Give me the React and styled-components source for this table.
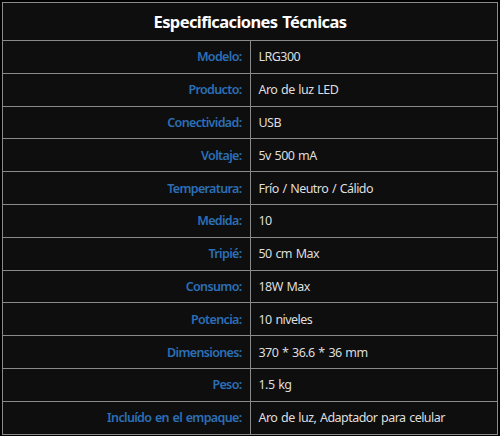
import React from 'react';
import styled, { createGlobalStyle } from 'styled-components';

const GlobalStyle = createGlobalStyle`
  body {
    margin: 0;
    background: #000000;
    font-family: "Noto Sans", "Open Sans", sans-serif;
  }
`;

const specs = [
  ['Modelo:', 'LRG300'],
  ['Producto:', 'Aro de luz LED'],
  ['Conectividad:', 'USB'],
  ['Voltaje:', '5v 500 mA'],
  ['Temperatura:', 'Frío / Neutro / Cálido'],
  ['Medida:', '10'],
  ['Tripié:', '50 cm Max'],
  ['Consumo:', '18W Max'],
  ['Potencia:', '10 niveles'],
  ['Dimensiones:', '370 * 36.6 * 36 mm'],
  ['Peso:', '1.5 kg'],
  ['Incluído en el empaque:', 'Aro de luz, Adaptador para celular'],
];

const Wrapper = styled.div`
  padding: 2px;
  width: 500px;
  height: 436px;
  box-sizing: border-box;
`;

const Table = styled.table`
  width: 100%;
  border-collapse: collapse;
  background: #0e0e0e;
  border: 1px solid #8a8a8a;
`;

const Title = styled.th`
  height: 37px;
  padding: 0;
  color: #ffffff;
  font-size: 16.5px;
  font-weight: 700;
  text-align: center;
  border: 1px solid #8a8a8a;
  letter-spacing: -0.6px;
  word-spacing: 1px;
`;

const Label = styled.td`
  width: 50%;
  height: 32.8px;
  padding: 0 8px 0 0;
  box-sizing: border-box;
  text-align: right;
  color: #2c6fb6;
  font-size: 12.5px;
  font-weight: 600;
  letter-spacing: -0.65px;
  word-spacing: 1px;
  border: 1px solid #8a8a8a;
`;

const Value = styled.td`
  padding: 0 0 0 8px;
  text-align: left;
  color: #dedede;
  font-size: 12.5px;
  letter-spacing: -0.55px;
  word-spacing: 1px;
  border: 1px solid #8a8a8a;
`;

export default function App() {
  return (
    <Wrapper>
      <GlobalStyle />
      <Table>
        <thead>
          <tr>
            <Title colSpan={2}>Especificaciones Técnicas</Title>
          </tr>
        </thead>
        <tbody>
          {specs.map(([label, value]) => (
            <tr key={label}>
              <Label>{label}</Label>
              <Value>{value}</Value>
            </tr>
          ))}
        </tbody>
      </Table>
    </Wrapper>
  );
}
